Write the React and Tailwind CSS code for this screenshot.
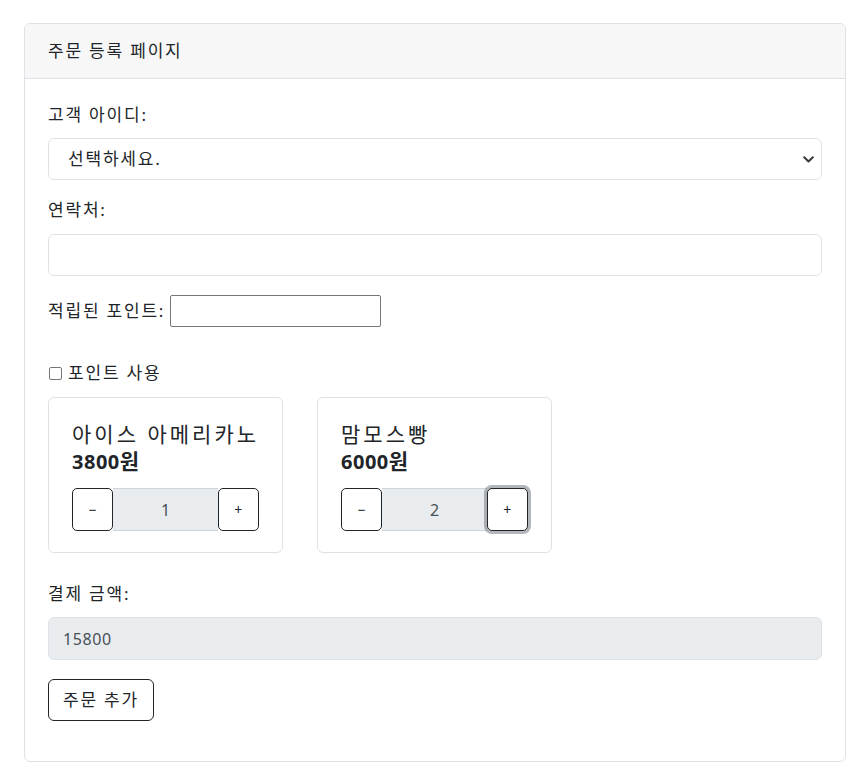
const products = [
  { name: '아이스 아메리카노', price: 3800, qty: 1, focused: false },
  { name: '맘모스빵', price: 6000, qty: 2, focused: true },
];

// Korean text in the reference renders wider than Noto CJK, so bump size + tracking
const ko = 'text-[17px] tracking-[1.8px]';

function ProductCard({ product }) {
  return (
    <div className="w-[235px] h-[156px] border border-[#dee2e6] rounded-[6px] pt-[23px] px-[23px]">
      <div className="text-[21px] tracking-[3px] leading-[27px] text-[#212529] whitespace-nowrap">{product.name}</div>
      <div className="text-[20px] leading-[27px] font-bold text-[#212529]">
        <span className="tracking-[0.5px]">{product.price}</span>
        <span className="text-[21px]">원</span>
      </div>
      <div className="mt-[13px] flex h-[43px]">
        <button className="w-[42px] h-full border border-[#212529] rounded-[5px] bg-white text-[14px] text-[#212529] flex items-center justify-center">
          −
        </button>
        <div className="w-[106px] h-full bg-[#e9ecef] border-y border-[#ced4da] flex items-center justify-center text-[16px] text-[#495057]">
          {product.qty}
        </div>
        <button
          className={`w-[42px] h-full border border-[#212529] rounded-[5px] bg-white text-[14px] text-[#212529] flex items-center justify-center ${
            product.focused ? 'shadow-[0_0_0_3px_rgba(128,134,140,0.6)]' : ''
          }`}
        >
          +
        </button>
      </div>
    </div>
  );
}

export default function App() {
  return (
    <div
      className="min-h-screen bg-white pt-[23px] pl-[24px] text-[16px] text-[#212529]"
      style={{ fontFamily: '"Noto Sans", "Noto Sans CJK KR", sans-serif' }}
    >
      <div className="w-[822px] border border-[#dee2e6] rounded-[6px] overflow-hidden">
        {/* header */}
        <div className={`h-[55px] bg-[#f7f7f7] border-b border-[#dee2e6] px-[23px] flex items-center ${ko}`}>
          주문 등록 페이지
        </div>

        {/* body */}
        <div className="px-[23px] pt-[24px] pb-[40px] flex flex-col">
          <label className={`h-6 leading-6 ${ko}`}>고객 아이디:</label>
          <div className="mt-[11px] h-[42px] border border-[#dee2e6] rounded-[6px] pl-[19px] pr-[7px] flex items-center justify-between">
            <span className={ko}>선택하세요.</span>
            <svg width="11" height="7" viewBox="0 0 11 7" fill="none" className="text-[#343a40]">
              <path d="M1.2 1.2l4.3 4.3 4.3-4.3" stroke="currentColor" strokeWidth="2" strokeLinecap="round" strokeLinejoin="round" />
            </svg>
          </div>

          <label className={`mt-[18px] h-6 leading-6 ${ko}`}>연락처:</label>
          <div className="mt-[12px] h-[42px] border border-[#dee2e6] rounded-[6px]" />

          <div className="mt-[19px] h-[32px] flex items-center">
            <span className={ko}>적립된 포인트:</span>
            <div className="ml-[5px] w-[211px] h-[32px] border border-[#767676] rounded-[2px]" />
          </div>

          <div className="mt-[34px] h-6 flex items-center">
            <span className="ml-[1px] w-[13px] h-[13px] border border-[#767676] rounded-[2px]" />
            <span className={`ml-[6px] leading-6 ${ko}`}>포인트 사용</span>
          </div>

          <div className="mt-[12px] flex gap-[34px]">
            {products.map((p) => (
              <ProductCard key={p.name} product={p} />
            ))}
          </div>

          <label className={`mt-[29px] h-6 leading-6 ${ko}`}>결제 금액:</label>
          <div className="mt-[11px] h-[43px] bg-[#e9ecef] border border-[#dee2e6] rounded-[6px] pl-[14px] flex items-center text-[#495057] tracking-[0.6px]">
            15800
          </div>

          <div className="mt-[19px]">
            <button className={`w-[106px] h-[42px] border border-[#212529] rounded-[6px] bg-white flex items-center justify-center ${ko}`}>
              주문 추가
            </button>
          </div>
        </div>
      </div>
    </div>
  );
}
